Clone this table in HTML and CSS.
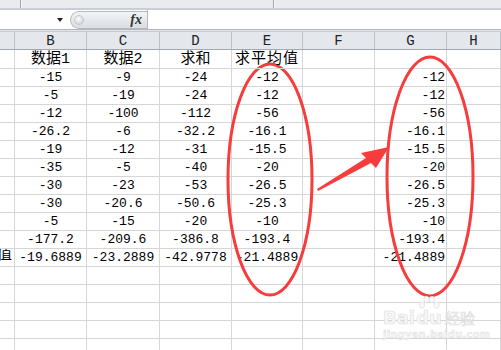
FILE: index.html
```html
<!DOCTYPE html>
<html>
<head>
<meta charset="utf-8">
<link rel="stylesheet" href="styles.css">
</head>
<body>
<div class="app">
  <div class="topstrip">
    <span class="vline first"></span>
    <span class="vline second"></span>
  </div>
  <div class="fbar">
    <div class="namebox"><span class="caret"></span></div>
    <div class="capsule"><span class="dimple"></span><span class="fx">fx</span></div>
    <div class="finput"></div>
  </div>
  <div class="fbar-sep"></div>

  <div class="sheet">
    <div class="row head">
      <div class="hc"></div><div class="hc">B</div><div class="hc">C</div><div class="hc">D</div><div class="hc">E</div><div class="hc">F</div><div class="hc">G</div><div class="hc">H</div>
    </div>
    <div class="row r1">
      <div class="c"></div><div class="c cjk">数据1</div><div class="c cjk">数据2</div><div class="c cjk">求和</div><div class="c cjk wide">求平均值</div><div class="c"></div><div class="c"></div><div class="c"></div>
    </div>
    <div class="row"><div class="c"></div><div class="c">-15</div><div class="c">-9</div><div class="c">-24</div><div class="c">-12</div><div class="c"></div><div class="c r">-12</div><div class="c"></div></div>
    <div class="row"><div class="c"></div><div class="c">-5</div><div class="c">-19</div><div class="c">-24</div><div class="c">-12</div><div class="c"></div><div class="c r">-12</div><div class="c"></div></div>
    <div class="row"><div class="c"></div><div class="c">-12</div><div class="c">-100</div><div class="c">-112</div><div class="c">-56</div><div class="c"></div><div class="c r">-56</div><div class="c"></div></div>
    <div class="row"><div class="c"></div><div class="c">-26.2</div><div class="c">-6</div><div class="c">-32.2</div><div class="c">-16.1</div><div class="c"></div><div class="c r">-16.1</div><div class="c"></div></div>
    <div class="row"><div class="c"></div><div class="c">-19</div><div class="c">-12</div><div class="c">-31</div><div class="c">-15.5</div><div class="c"></div><div class="c r">-15.5</div><div class="c"></div></div>
    <div class="row"><div class="c"></div><div class="c">-35</div><div class="c">-5</div><div class="c">-40</div><div class="c">-20</div><div class="c"></div><div class="c r">-20</div><div class="c"></div></div>
    <div class="row"><div class="c"></div><div class="c">-30</div><div class="c">-23</div><div class="c">-53</div><div class="c">-26.5</div><div class="c"></div><div class="c r">-26.5</div><div class="c"></div></div>
    <div class="row"><div class="c"></div><div class="c">-30</div><div class="c">-20.6</div><div class="c">-50.6</div><div class="c">-25.3</div><div class="c"></div><div class="c r">-25.3</div><div class="c"></div></div>
    <div class="row"><div class="c"></div><div class="c">-5</div><div class="c">-15</div><div class="c">-20</div><div class="c">-10</div><div class="c"></div><div class="c r">-10</div><div class="c"></div></div>
    <div class="row"><div class="c"></div><div class="c">-177.2</div><div class="c">-209.6</div><div class="c">-386.8</div><div class="c">-193.4</div><div class="c"></div><div class="c r">-193.4</div><div class="c"></div></div>
    <div class="row"><div class="c clipl"><span class="cjk">平均值</span></div><div class="c">-19.6889</div><div class="c">-23.2889</div><div class="c">-42.9778</div><div class="c">-21.4889</div><div class="c"></div><div class="c r">-21.4889</div><div class="c"></div></div>
    <div class="row"><div class="c"></div><div class="c"></div><div class="c"></div><div class="c"></div><div class="c"></div><div class="c"></div><div class="c"></div><div class="c"></div></div>
    <div class="row"><div class="c"></div><div class="c"></div><div class="c"></div><div class="c"></div><div class="c"></div><div class="c"></div><div class="c"></div><div class="c"></div></div>
    <div class="row"><div class="c"></div><div class="c"></div><div class="c"></div><div class="c"></div><div class="c"></div><div class="c"></div><div class="c"></div><div class="c"></div></div>
    <div class="row"><div class="c"></div><div class="c"></div><div class="c"></div><div class="c"></div><div class="c"></div><div class="c"></div><div class="c"></div><div class="c"></div></div>
    <div class="row"><div class="c"></div><div class="c"></div><div class="c"></div><div class="c"></div><div class="c"></div><div class="c"></div><div class="c"></div><div class="c"></div></div>
  </div>

  <svg class="marks" width="501" height="350" viewBox="0 0 501 350">
    <ellipse cx="270" cy="179.5" rx="42" ry="115.5" fill="none" stroke="#f63c3c" stroke-width="3"/>
    <ellipse cx="430" cy="176.5" rx="43" ry="119.5" fill="none" stroke="#f63c3c" stroke-width="3"/>
    <polygon points="317,189 366,158 361,153 389,147 376,168 371,163 318,191" fill="#f63c3c"/>
  </svg>

  <div class="watermark">
    <div class="wm-top">
      <span class="wm-bai">Bai</span>
      <span class="wm-paw">
        <svg width="24" height="16" viewBox="0 0 24 16">
          <ellipse cx="5" cy="10" rx="2.6" ry="3.2" fill="#f9f9f9" stroke="#e0e0e0" stroke-width="0.8"/>
          <ellipse cx="9.5" cy="4.5" rx="2.6" ry="3.2" fill="#f9f9f9" stroke="#e0e0e0" stroke-width="0.8"/>
          <ellipse cx="15" cy="4.5" rx="2.6" ry="3.2" fill="#f9f9f9" stroke="#e0e0e0" stroke-width="0.8"/>
          <ellipse cx="19.5" cy="10" rx="2.6" ry="3.2" fill="#f9f9f9" stroke="#e0e0e0" stroke-width="0.8"/>
        </svg>
        <span class="wm-du">du</span>
      </span>
      <span class="wm-jy">经验</span>
    </div>
    <div class="wm-url">jingyan.baidu.com</div>
  </div>
</div>
</body>
</html>
```

FILE: styles.css
```css
* { box-sizing: border-box; }
html, body { margin: 0; padding: 0; background: #fff; }
body { width: 501px; height: 350px; overflow: hidden; }
.app { position: relative; width: 501px; height: 350px; overflow: hidden; }

.topstrip {
  height: 10px;
  background: #e9ebee;
  border-bottom: 2px solid #c9ced4;
  display: flex;
}
.vline { width: 2px; height: 8px; border-left: 1px solid #9fa6ae; border-right: 1px solid #f6f7f8; }
.vline.first { margin-left: 20px; }
.vline.second { margin-left: 251px; }

.fbar {
  height: 19px;
  display: flex;
  background: #fff;
}
.namebox {
  width: 70px;
  display: flex;
  align-items: center;
  justify-content: flex-end;
  padding-right: 7px;
}
.caret {
  width: 0; height: 0;
  border-left: 3.5px solid transparent;
  border-right: 3.5px solid transparent;
  border-top: 4px solid #222;
}
.capsule {
  width: 77px;
  height: 18px;
  margin-top: 1px;
  border: 1px solid #b4b9bf;
  border-right: none;
  border-radius: 9px 0 0 9px;
  background: linear-gradient(#f3f4f5, #dadde1);
  display: flex;
  align-items: center;
  justify-content: space-between;
  padding-left: 3px;
  padding-right: 5px;
}
.dimple {
  width: 10px; height: 10px; border-radius: 50%;
  background: radial-gradient(circle at 40% 35%, #fbfbfb, #c9ccd0);
  border: 1px solid #c4c8cc;
}
.fx {
  font-family: "Liberation Serif", serif;
  font-style: italic;
  font-weight: bold;
  font-size: 14px;
  color: #333;
  line-height: 1;
}
.finput { flex: 1; border-left: 1px solid #b4b9bf; }

.fbar-sep {
  height: 3px;
  border-top: 1px solid #aeb4bb;
  background: #e3e6ea;
  border-bottom: 1px solid #c4c9cf;
}

.sheet { display: flex; flex-direction: column; }
.row {
  display: grid;
  grid-template-columns: 15px 72px 73px 72px 71px 72px 72px 54px;
  height: 18px;
}
.row.r1 { height: 19px; }
.row.head {
  height: 18px;
  background: #e4e7eb;
  border-bottom: 1px solid #a3a9b0;
}
.hc {
  border-right: 1px solid #bcc1c7;
  display: flex;
  align-items: center;
  justify-content: center;
  font-family: "Liberation Mono", monospace;
  font-size: 14px;
  color: #222;
  padding-top: 1px;
}
.c {
  border-right: 1px solid #d6d6d6;
  border-bottom: 1px solid #d6d6d6;
  display: flex;
  align-items: flex-end;
  justify-content: center;
  font-family: "Liberation Mono", monospace;
  font-size: 13px;
  line-height: 13px;
  color: #000;
  padding-bottom: 2px;
  white-space: nowrap;
}
.c.r { justify-content: flex-end; padding-right: 1px; }
.c.cjk, .cjk {
  font-family: "Liberation Mono", "Noto Sans CJK SC", monospace;
  font-size: 15px;
  line-height: 15px;
  padding-bottom: 1px;
}
.c.wide { overflow: visible; letter-spacing: 1px; position: relative; z-index: 1; }
.c.clipl { overflow: hidden; justify-content: flex-end; padding-right: 2px; }

.marks { position: absolute; left: 0; top: 0; pointer-events: none; }

.watermark {
  position: absolute;
  left: 383px;
  top: 295px;
  width: 95px;
  font-family: "DejaVu Sans", sans-serif;
}
.wm-top { display: flex; align-items: flex-end; height: 32px; }
.wm-bai, .wm-du, .wm-jy {
  color: #f8f8f8;
  -webkit-text-stroke: 0.6px #dcdcdc;
  font-weight: bold;
  font-size: 18px;
  line-height: 18px;
}
.wm-paw { display: flex; flex-direction: column; align-items: center; margin-left: 1px; }
.wm-paw svg { display: block; }
.wm-du { margin-top: -2px; }
.wm-jy { font-family: "Noto Sans CJK SC", sans-serif; font-size: 15px; margin-left: 3px; font-weight: normal; }
.wm-url {
  color: #f6f6f6;
  -webkit-text-stroke: 0.4px #dadada;
  font-size: 10px;
  font-weight: bold;
  margin-top: 2px;
  letter-spacing: 0.2px;
}
```
